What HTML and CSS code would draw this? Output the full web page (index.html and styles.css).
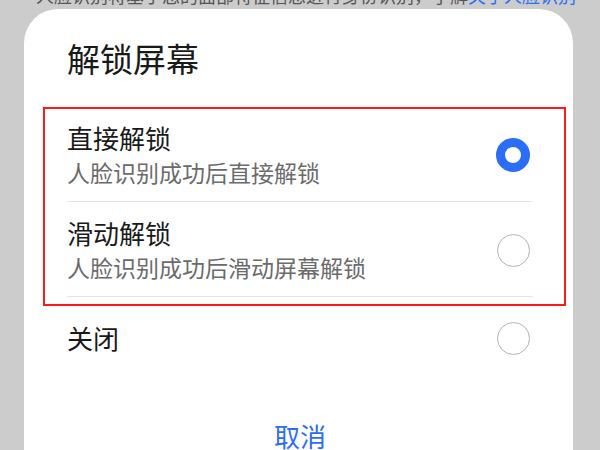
FILE: index.html
```html
<!DOCTYPE html>
<html lang="zh-CN">
<head>
  <meta charset="UTF-8" />
  <title>解锁屏幕</title>
  <link rel="stylesheet" href="styles.css">
</head>
<body>
  <p class="behind">人脸识别将基于您的面部特征信息进行身份识别，了解<span class="behind-link">关于人脸识别</span></p>

  <div class="sheet">
    <h1 class="sheet-title">解锁屏幕</h1>

    <div class="highlight">
      <div class="option">
        <div class="option-text">
          <div class="option-name">直接解锁</div>
          <div class="option-desc">人脸识别成功后直接解锁</div>
        </div>
        <span class="radio checked"></span>
      </div>
      <div class="option">
        <div class="option-text">
          <div class="option-name">滑动解锁</div>
          <div class="option-desc">人脸识别成功后滑动屏幕解锁</div>
        </div>
        <span class="radio"></span>
      </div>
    </div>

    <div class="option option-plain">
      <div class="option-name">关闭</div>
      <span class="radio"></span>
    </div>

    <div class="sheet-actions">
      <button class="cancel">取消</button>
    </div>
  </div>
</body>
</html>
```

FILE: styles.css
```css
body { margin: 0; height: 450px; overflow: hidden; background: #cccccc; font-family: "Noto Sans CJK SC", "Noto Sans", sans-serif; color: #191919; }

.behind { margin: -15px 0 4px; padding-left: 36px; font-size: 18px; line-height: 20px; color: #555; white-space: nowrap; }
.behind-link { color: #2a6ef6; }

.sheet { margin: 0 27px 0 24px; padding: 29px 40px 0 43px; background: #fff; border-radius: 34px 34px 0 0; height: 500px; }
.sheet-title { margin: 0; font-size: 33px; font-weight: 400; line-height: 40px; }

.highlight { margin: 29px -33px 0 -24px; padding: 0 31px 7px 22px; border: 2px solid #ff1a1a; }

.option { display: flex; align-items: center; justify-content: space-between; padding: 14px 0 12px; border-bottom: 1px solid #e3e3e3; }
.option:first-child { padding-top: 12px; }
.option-plain { padding: 15px 0; border-bottom: none; }

.option-name { font-size: 26px; line-height: 34px; }
.option-desc { font-size: 23px; line-height: 34px; color: #6b6b6b; }

.radio { flex: none; width: 33px; height: 33px; margin-right: 3px; box-sizing: border-box; border-radius: 50%; border: 1.5px solid #b4b4b4; }
.radio.checked { width: 34px; height: 34px; border: 9px solid #2a6ef6; }

.sheet-actions { margin-top: 49px; text-align: center; }
.cancel { background: none; border: none; padding: 0; font-family: inherit; font-size: 26px; line-height: 34px; color: #2a6ef6; cursor: pointer; }
```
